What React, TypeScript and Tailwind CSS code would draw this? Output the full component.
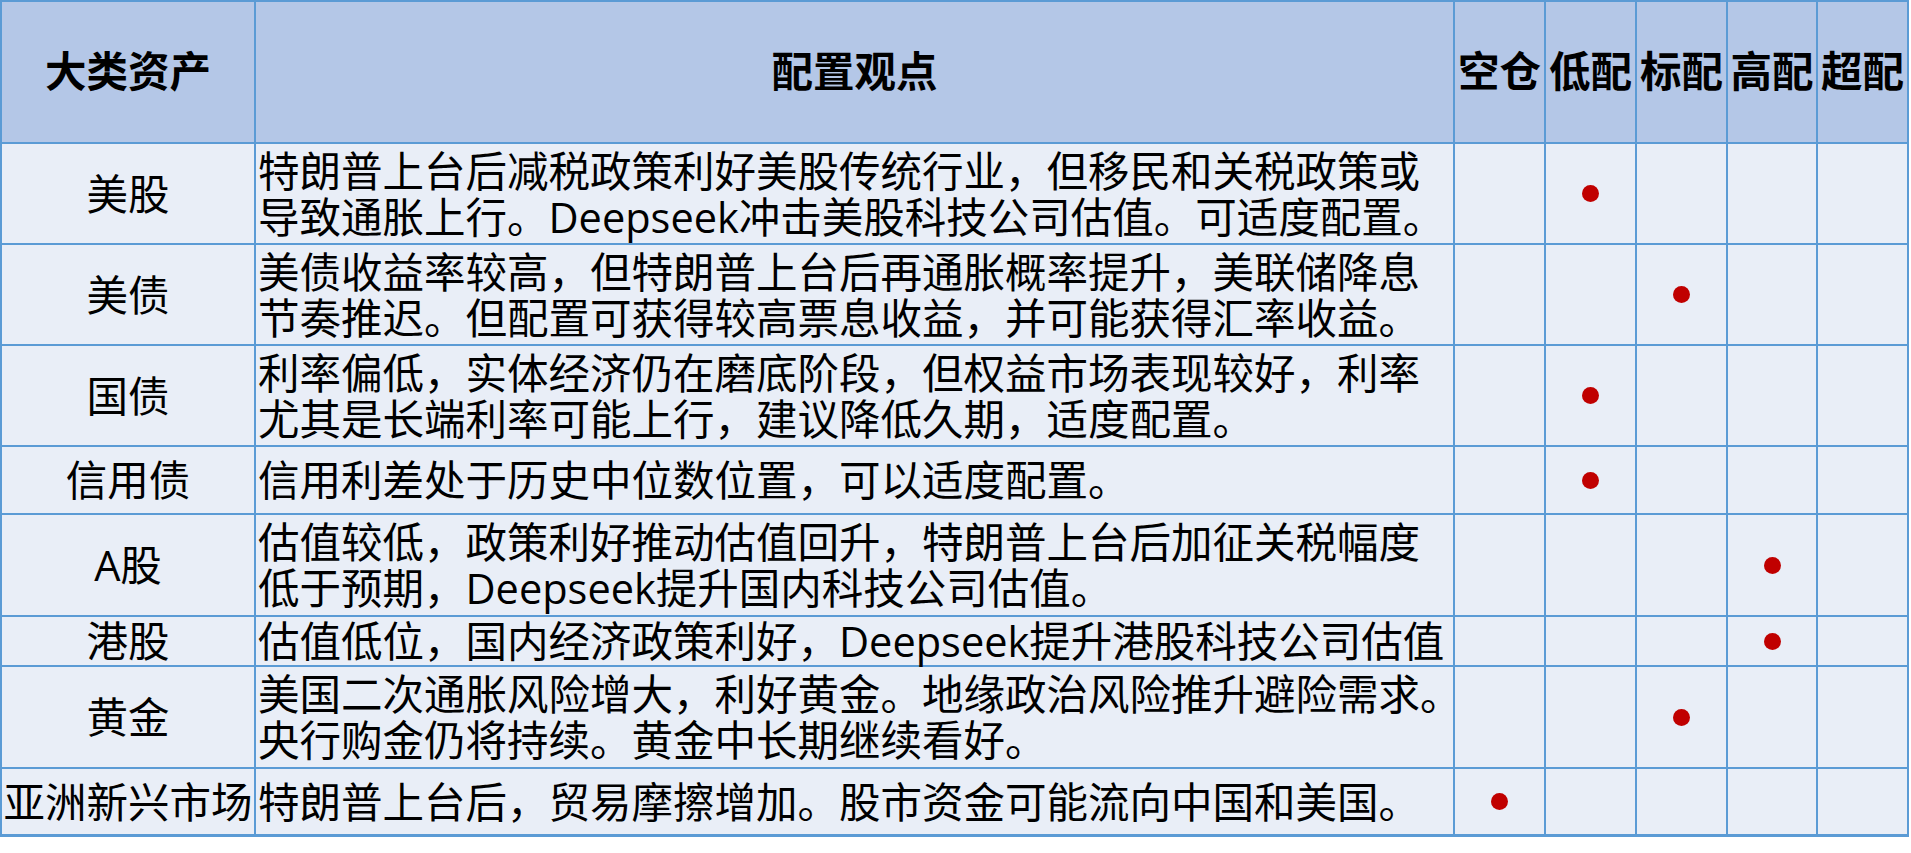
const levels = ['空仓', '低配', '标配', '高配', '超配']

const rows: { name: string; lines: string[]; level: number }[] = [
  {
    name: '美股',
    lines: ['特朗普上台后减税政策利好美股传统行业，但移民和关税政策或', '导致通胀上行。Deepseek冲击美股科技公司估值。可适度配置。'],
    level: 1,
  },
  {
    name: '美债',
    lines: ['美债收益率较高，但特朗普上台后再通胀概率提升，美联储降息', '节奏推迟。但配置可获得较高票息收益，并可能获得汇率收益。'],
    level: 2,
  },
  {
    name: '国债',
    lines: ['利率偏低，实体经济仍在磨底阶段，但权益市场表现较好，利率', '尤其是长端利率可能上行，建议降低久期，适度配置。'],
    level: 1,
  },
  { name: '信用债', lines: ['信用利差处于历史中位数位置，可以适度配置。'], level: 1 },
  {
    name: 'A股',
    lines: ['估值较低，政策利好推动估值回升，特朗普上台后加征关税幅度', '低于预期，Deepseek提升国内科技公司估值。'],
    level: 3,
  },
  { name: '港股', lines: ['估值低位，国内经济政策利好，Deepseek提升港股科技公司估值'], level: 3 },
  {
    name: '黄金',
    lines: ['美国二次通胀风险增大，利好黄金。地缘政治风险推升避险需求。', '央行购金仍将持续。黄金中长期继续看好。'],
    level: 2,
  },
  { name: '亚洲新兴市场', lines: ['特朗普上台后，贸易摩擦增加。股市资金可能流向中国和美国。'], level: 0 },
]

export default function App() {
  return (
    <div className="w-[1911px] h-[853px] bg-white font-['Open_Sans','Noto_Sans_CJK_SC',sans-serif] text-[41.5px] text-black">
      <div className="grid w-[1909px] grid-cols-[252px_1197px_89px_89px_89px_88px_89px] grid-rows-[140px_99px_99px_99px_66px_100px_48px_100px_65px] gap-[2px] bg-[#5b9bd5] p-[2px] pb-[3px]">
        <HeaderCell>大类资产</HeaderCell>
        <HeaderCell>配置观点</HeaderCell>
        {levels.map((l) => (
          <HeaderCell key={l}>{l}</HeaderCell>
        ))}

        {rows.map((row) => (
          <Row key={row.name} row={row} />
        ))}
      </div>
    </div>
  )
}

function HeaderCell({ children }: { children: React.ReactNode }) {
  return (
    <div className="flex items-center justify-center whitespace-nowrap bg-[#b4c7e7] font-bold leading-none">
      {children}
    </div>
  )
}

function Row({ row }: { row: { name: string; lines: string[]; level: number } }) {
  return (
    <>
      <div className="flex items-center justify-center whitespace-nowrap bg-[#e9eef7] leading-[46px]">
        {row.name}
      </div>
      <div className="flex flex-col justify-center whitespace-nowrap bg-[#e9eef7] pl-[2px] leading-[46px]">
        {row.lines.map((line) => (
          <div key={line}>{line}</div>
        ))}
      </div>
      {levels.map((l, i) => (
        <div key={l} className="flex items-center justify-center bg-[#e9eef7]">
          {row.level === i && <span className="h-[17px] w-[17px] rounded-full bg-[#c00000]" />}
        </div>
      ))}
    </>
  )
}
